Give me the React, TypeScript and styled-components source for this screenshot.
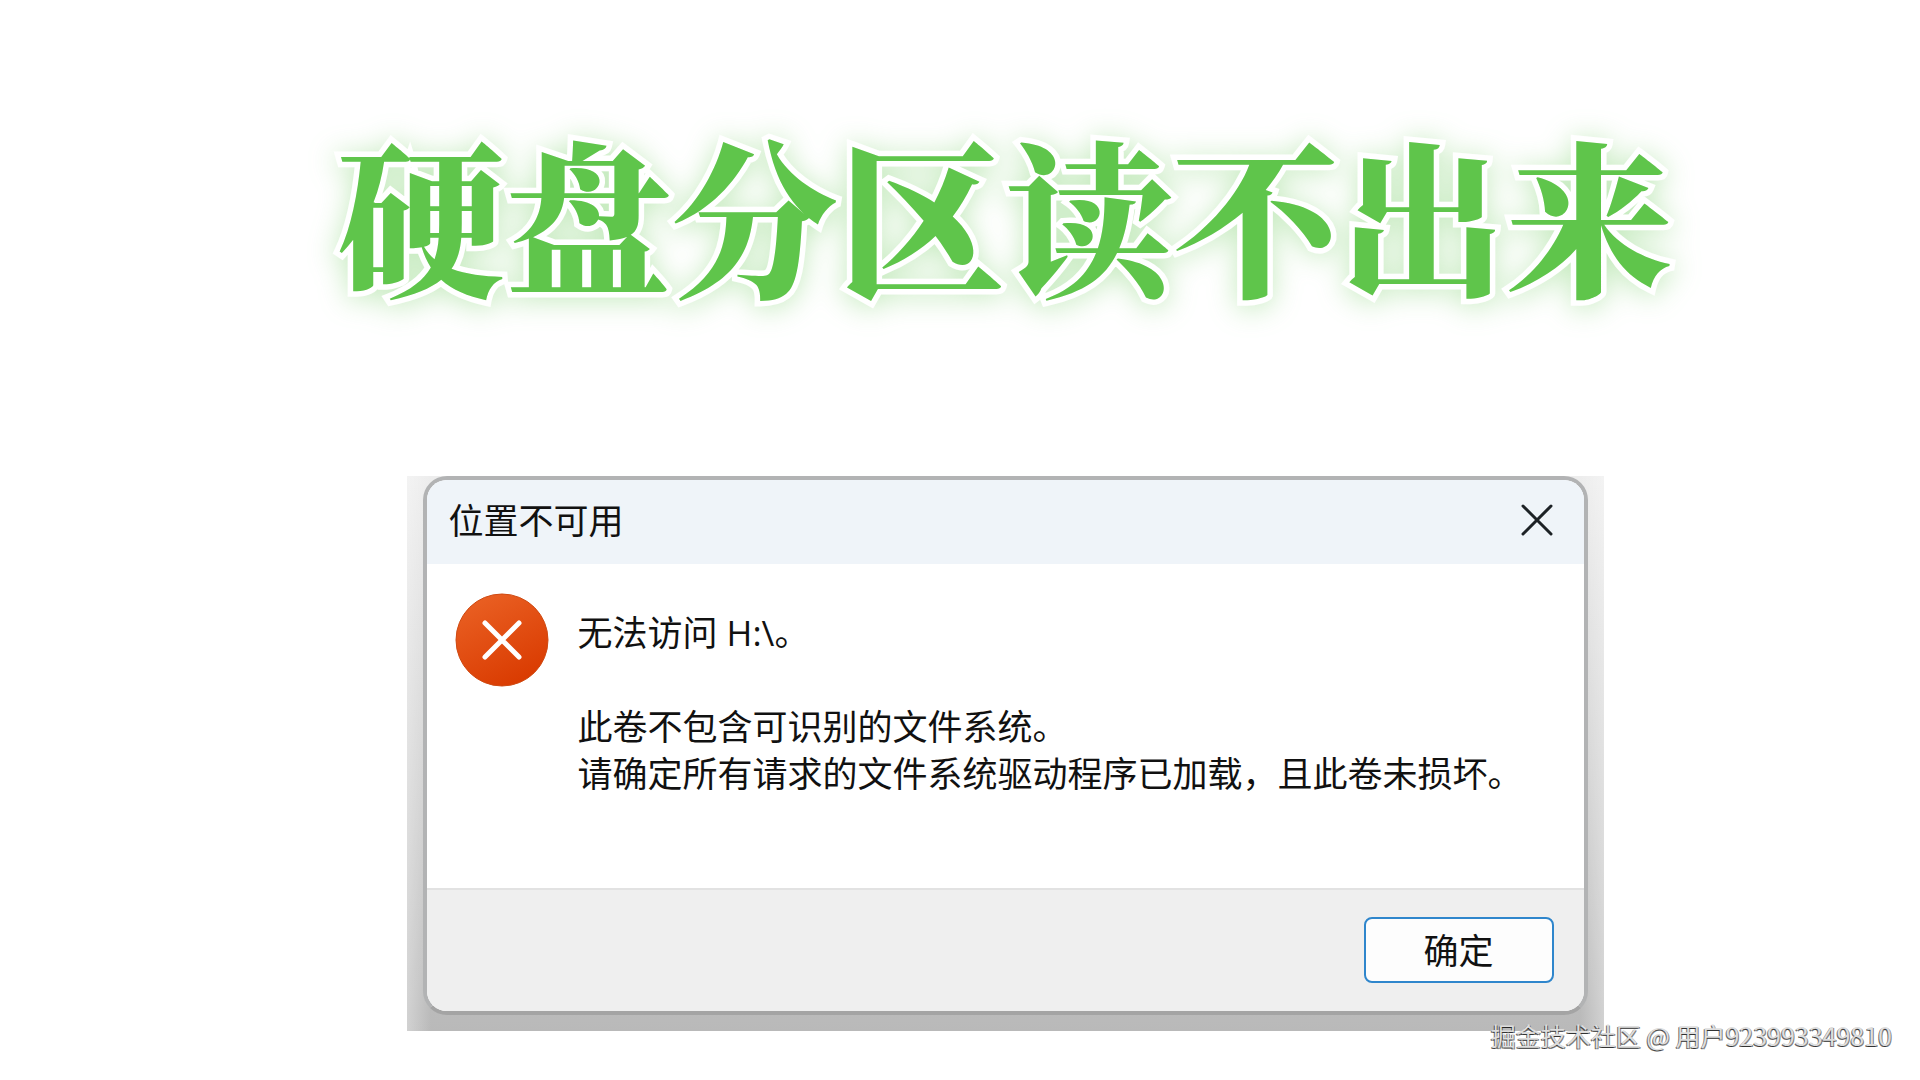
import React from "react";
import styled, { createGlobalStyle } from "styled-components";

const GlobalStyle = createGlobalStyle`
  *, *::before, *::after { box-sizing: border-box; }
  body {
    margin: 0;
    background: #fff;
    color: #111;
    font-family: "Noto Sans CJK SC", "Noto Sans", sans-serif;
  }
  h1, h2, p { margin: 0; font-weight: 400; }
`;

const Page = styled.main`
  position: relative;
  min-height: 100vh;
  display: flex;
  flex-direction: column;
  align-items: center;
  padding: 92px 0 40px 90px;
`;

const Headline = styled.h1`
  font-family: "Noto Serif CJK SC", "Source Han Serif SC", "Noto Sans CJK SC", serif;
  font-size: 167px;
  line-height: 240px;
  font-weight: 900;
  color: #5fc54b;
  white-space: nowrap;
  -webkit-text-stroke: 11px #fff;
  paint-order: stroke fill;
  filter: drop-shadow(0 3px 14px rgba(95, 197, 75, 0.36));
`;

const Backdrop = styled.div`
  width: 1197px;
  max-width: 100%;
  margin-top: 144px;
  padding: 0 16px 16px;
  background:
    linear-gradient(to right, rgba(255, 255, 255, 0.35), transparent 24px, transparent calc(100% - 24px), rgba(255, 255, 255, 0.35)),
    linear-gradient(#ededed, #d8d8d8 40%, #b9b9b9);
`;

const Dialog = styled.section`
  display: flex;
  flex-direction: column;
  border: 4px solid #b2b3b4;
  border-bottom-color: #a4a4a4;
  border-radius: 24px;
  background: #fff;
  overflow: hidden;
`;

const TitleBar = styled.header`
  display: flex;
  align-items: center;
  justify-content: space-between;
  height: 84px;
  padding: 0 23px 4px 22px;
  background: #eff4f9;
`;

const DialogTitle = styled.h2`
  padding-bottom: 4px;
  font-size: 35px;
  line-height: 47px;
`;

const CloseButton = styled.button`
  display: flex;
  align-items: center;
  justify-content: center;
  width: 48px;
  height: 48px;
  padding: 0;
  border: 0;
  background: transparent;
  color: #1d2226;
`;

const Content = styled.div`
  display: flex;
  gap: 29px;
  height: 324px;
  padding: 29px 28px;
`;

const ErrorIcon = styled.svg`
  flex: none;
  width: 94px;
  height: 94px;
`;

const Message = styled.div`
  flex: 1;
  min-width: 0;
  padding-top: 16px;
  font-family: "Open Sans", "Noto Sans CJK SC", sans-serif;
  font-size: 35px;
  line-height: 47px;
`;

const Line = styled.p`
  min-height: 47px;
`;

const Actions = styled.footer`
  display: flex;
  justify-content: flex-end;
  padding: 27px 30px 28px;
  border-top: 2px solid #e2e2e2;
  background: #efefef;
`;

const ConfirmButton = styled.button`
  width: 190px;
  height: 66px;
  padding: 0 0 4px;
  border: 2px solid #2f86cc;
  border-radius: 8px;
  background: #fdfdfd;
  color: #111;
  font: inherit;
  font-size: 35px;
  line-height: 47px;
`;

const Watermark = styled.p`
  position: absolute;
  right: 28px;
  bottom: 27px;
  font-size: 25px;
  line-height: 36px;
  color: #dedede;
  text-shadow: -1px 1px 0 rgba(0, 0, 0, 0.6), 1px 1px 0 rgba(0, 0, 0, 0.5);
`;

export default function App() {
  return (
    <Page>
      <GlobalStyle />
      <Headline>硬盘分区读不出来</Headline>
      <Backdrop>
        <Dialog role="alertdialog" aria-labelledby="dialog-title" aria-describedby="dialog-message">
          <TitleBar>
            <DialogTitle id="dialog-title">位置不可用</DialogTitle>
            <CloseButton type="button" aria-label="关闭">
              <svg width="32" height="32" viewBox="0 0 32 32" fill="none" stroke="currentColor" strokeWidth="3" strokeLinecap="round">
                <path d="M2 2 30 30M30 2 2 30" />
              </svg>
            </CloseButton>
          </TitleBar>
          <Content>
            <ErrorIcon viewBox="0 0 94 94" aria-hidden="true">
              <defs>
                <linearGradient id="error-fill" x1="0.2" y1="0" x2="0.7" y2="1">
                  <stop offset="0" stopColor="#ea6124" />
                  <stop offset="1" stopColor="#d93a00" />
                </linearGradient>
              </defs>
              <circle cx="47" cy="47" r="46" fill="url(#error-fill)" stroke="#cf4a12" strokeWidth="1" />
              <path d="M30 30 64 64M64 30 30 64" stroke="#fff" strokeWidth="5" strokeLinecap="round" />
            </ErrorIcon>
            <Message id="dialog-message">
              <Line>无法访问 H:\。</Line>
              <Line />
              <Line>此卷不包含可识别的文件系统。</Line>
              <Line>请确定所有请求的文件系统驱动程序已加载，且此卷未损坏。</Line>
            </Message>
          </Content>
          <Actions>
            <ConfirmButton type="button">确定</ConfirmButton>
          </Actions>
        </Dialog>
      </Backdrop>
      <Watermark>掘金技术社区 @ 用户923993349810</Watermark>
    </Page>
  );
}
